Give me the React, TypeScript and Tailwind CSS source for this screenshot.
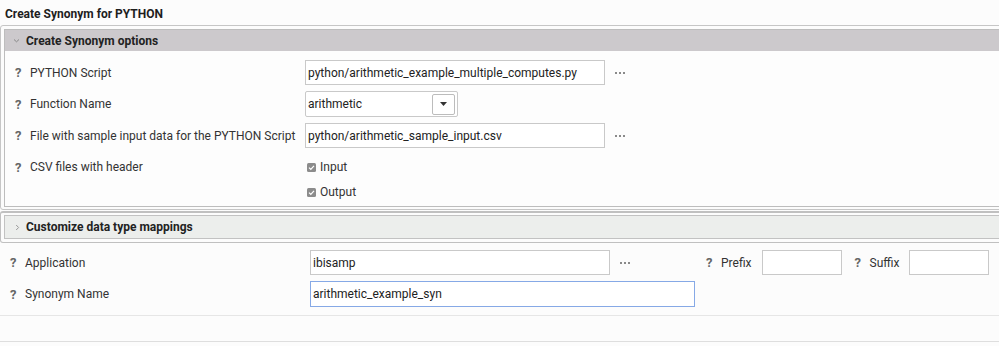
import { ReactNode } from "react";

const Help = ({ className = "" }: { className?: string }) => (
  <span className={`font-bold text-[13px] leading-none text-[#666] w-[7px] ${className}`}>?</span>
);

const Dots = () => (
  <div className="flex gap-[2px] ml-[10px]">
    <span className="w-[2px] h-[2px] bg-[#8a8a8a]" />
    <span className="w-[2px] h-[2px] bg-[#8a8a8a]" />
    <span className="w-[2px] h-[2px] bg-[#8a8a8a]" />
  </div>
);

const TextBox = ({ value = "", className = "" }: { value?: string; className?: string }) => (
  <div className={`h-[25px] bg-white border border-[#c9c9c9] flex items-center pl-[2px] text-[12px] text-[#222] ${className}`}>
    {value}
  </div>
);

const Check = ({ label }: { label: string }) => (
  <div className="flex items-center h-[20px] gap-[4px]">
    <svg width="9" height="9" viewBox="0 0 9 9">
      <rect x="0" y="0" width="9" height="9" rx="1.5" fill="#8c8c8c" />
      <path d="M2 4.6 L3.8 6.3 L7 2.8" stroke="#fff" strokeWidth="1.2" fill="none" />
    </svg>
    <span>{label}</span>
  </div>
);

type RowProps = { label: string; children?: ReactNode };

const OptionRow = ({ label, children }: RowProps) => (
  <div className="flex items-center">
    <div className="w-[300px] flex items-center pl-[10px] gap-[8px]">
      <Help />
      <span>{label}</span>
    </div>
    {children}
  </div>
);

const App = () => {
  return (
    <div className="w-[999px] h-[346px] overflow-hidden bg-[#fcfcfc] font-[Roboto,sans-serif] text-[12px] text-[#333]">
      <div className="h-[25px] pl-[5px] pt-[5px] font-bold text-[#1e1e1e]">Create Synonym for PYTHON</div>

      {/* Create Synonym options */}
      <div className="w-[1010px] border border-[#c6c6c6] rounded-[3px] px-[3px] pt-[3px] pb-[2px]">
        <div className="border border-[#bdbdbd] bg-[#fdfdfd]">
          <div className="h-[21px] bg-[#ccc9cc] flex items-center pl-[8px] gap-[6px] font-bold text-[#222]">
            <svg width="7" height="5" viewBox="0 0 7 5">
              <path d="M1 1.5 L3.5 3.8 L6 1.5" stroke="#888" strokeWidth="1" fill="none" />
            </svg>
            <span>Create Synonym options</span>
          </div>
          <div className="pt-[9px] pb-[4px] flex flex-col">
            <OptionRow label="PYTHON Script">
              <TextBox className="w-[300px]" value="python/arithmetic_example_multiple_computes.py" />
              <Dots />
            </OptionRow>
            <div className="mt-[6px]">
              <OptionRow label="Function Name">
                <div className="w-[153px] h-[26px] bg-white border border-[#c9c9c9] rounded-[2px] flex items-center justify-between pl-[2px] pr-[2px]">
                  <span className="text-[#222]">arithmetic</span>
                  <div className="w-[23px] h-[21px] border border-[#bcbcbc] rounded-[2px] flex items-center justify-center">
                    <svg width="7" height="4" viewBox="0 0 7 4">
                      <path d="M0 0 L7 0 L3.5 4 Z" fill="#333" />
                    </svg>
                  </div>
                </div>
              </OptionRow>
            </div>
            <div className="mt-[6px]">
              <OptionRow label="File with sample input data for the PYTHON Script">
                <TextBox className="w-[300px]" value="python/arithmetic_sample_input.csv" />
                <Dots />
              </OptionRow>
            </div>
            <div className="mt-[9px] flex">
              <div className="w-[300px] h-[20px] flex items-center pl-[10px] gap-[8px]">
                <Help />
                <span>CSV files with header</span>
              </div>
              <div className="flex flex-col gap-[5px] pl-[2px]">
                <Check label="Input" />
                <Check label="Output" />
              </div>
            </div>
          </div>
        </div>
      </div>

      {/* Customize data type mappings */}
      <div className="mt-[1px] w-[1010px] border border-t-2 border-[#c0c0c0] rounded-[3px] px-[3px] pt-[2px] pb-[3px]">
        <div className="border border-[#c2c2c2]">
          <div className="h-[22px] bg-[#eceeec] flex items-center pl-[10px] gap-[6px] font-bold text-[#222]">
            <svg width="5" height="7" viewBox="0 0 5 7">
              <path d="M1.2 1 L3.6 3.5 L1.2 6" stroke="#999" strokeWidth="1" fill="none" />
            </svg>
            <span>Customize data type mappings</span>
          </div>
        </div>
      </div>

      {/* Application / Synonym name */}
      <div className="pt-[7px] pb-[8px] border-b border-[#e6e6e6] flex flex-col gap-[6px]">
        <div className="flex items-center">
          <div className="w-[310px] flex items-center pl-[10px] gap-[8px]">
            <Help />
            <span>Application</span>
          </div>
          <TextBox className="w-[300px]" value="ibisamp" />
          <Dots />
          <div className="ml-[76px] flex items-center gap-[8px]">
            <Help />
            <span>Prefix</span>
          </div>
          <TextBox className="w-[80px] ml-[10px]" />
          <div className="ml-[13px] flex items-center gap-[8px]">
            <Help />
            <span>Suffix</span>
          </div>
          <TextBox className="w-[80px] ml-[10px]" />
        </div>
        <div className="flex items-center">
          <div className="w-[310px] flex items-center pl-[10px] gap-[8px]">
            <Help />
            <span>Synonym Name</span>
          </div>
          <div className="w-[385px] h-[26px] bg-white border border-[#86a9e6] flex items-center pl-[2px] text-[#222]">
            arithmetic_example_syn
          </div>
        </div>
      </div>
      <div className="h-[26px] border-b border-[#dedede]" />
    </div>
  );
};

export default App;
